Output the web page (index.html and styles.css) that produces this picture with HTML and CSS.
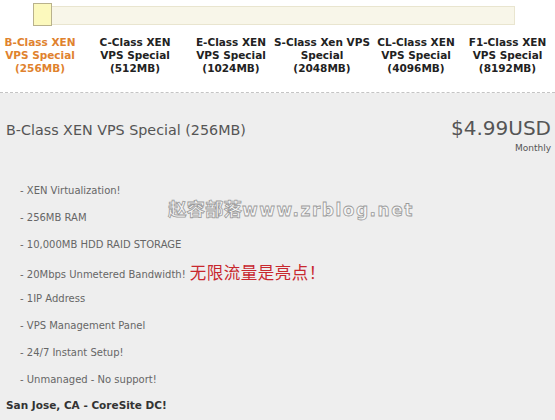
FILE: index.html
```html
<!DOCTYPE html>
<html>
<head>
<meta charset="utf-8">
<link rel="stylesheet" href="styles.css">
</head>
<body>
<div class="top">
  <div class="slider"><div class="handle"></div></div>
  <div class="tabs">
    <div class="tab active">B-Class XEN<br>VPS Special<br>(256MB)</div>
    <div class="tab">C-Class XEN<br>VPS Special<br>(512MB)</div>
    <div class="tab">E-Class XEN<br>VPS Special<br>(1024MB)</div>
    <div class="tab">S-Class Xen VPS<br>Special<br>(2048MB)</div>
    <div class="tab">CL-Class XEN<br>VPS Special<br>(4096MB)</div>
    <div class="tab">F1-Class XEN<br>VPS Special<br>(8192MB)</div>
  </div>
</div>
<div class="main">
  <div class="head">
    <h1 class="title">B-Class XEN VPS Special (256MB)</h1>
    <div class="price">
      <div class="amount">$4.99USD</div>
      <div class="period">Monthly</div>
    </div>
  </div>
  <ul class="features">
    <li>- XEN Virtualization!</li>
    <li>- 256MB RAM<span class="watermark"><span class="wm-cn">赵容部落</span><span class="wm-en">www.zrblog.net</span></span></li>
    <li>- 10,000MB HDD RAID STORAGE</li>
    <li>- 20Mbps Unmetered Bandwidth! <span class="note">无限流量是亮点！</span></li>
    <li>- 1IP Address</li>
    <li>- VPS Management Panel</li>
    <li>- 24/7 Instant Setup!</li>
    <li>- Unmanaged - No support!</li>
  </ul>
  <div class="location">San Jose, CA - CoreSite DC!</div>
</div>
</body>
</html>
```
FILE: styles.css
```css
html, body {
  margin: 0;
  padding: 0;
}
body {
  width: 555px;
  height: 420px;
  overflow: hidden;
  background: #eeeeee;
  font-family: "DejaVu Sans", Verdana, sans-serif;
}
.top {
  background: #ffffff;
  padding-top: 6px;
  height: 86px;
  border-bottom: 1px dashed #c4c4c4;
}
.slider {
  position: relative;
  margin-left: 33px;
  width: 480px;
  height: 17px;
  background: #f8f6e9;
  border: 1px solid #e9e5cf;
}
.handle {
  position: absolute;
  left: -1px;
  top: -4px;
  width: 17px;
  height: 21px;
  background: #fcf9bd;
  border: 1px solid #b9b28c;
}
.tabs {
  display: grid;
  grid-template-columns: 80px 110px 82px 100px 88px 95px;
  margin-top: 11px;
}
.tab {
  text-align: center;
  font-weight: bold;
  font-size: 10.5px;
  line-height: 13px;
  color: #222222;
  white-space: nowrap;
}
.tab.active {
  color: #e0822e;
}
.main {
  padding: 0 6px;
}
.head {
  display: flex;
  justify-content: space-between;
  align-items: flex-start;
  padding-top: 23px;
}
.title {
  margin: 6px 0 0;
  font-size: 14.3px;
  font-weight: normal;
  color: #555555;
}
.price {
  text-align: right;
  color: #555555;
  margin-right: -2px;
}
.amount {
  font-size: 20px;
  line-height: 24px;
}
.period {
  font-size: 9px;
  line-height: 14px;
  margin-top: 1px;
}
.features {
  list-style: none;
  margin: 29px 0 0;
  padding: 0 0 0 14px;
  font-size: 10px;
  color: #666666;
}
.features li {
  height: 27px;
  line-height: 14px;
  position: relative;
}
.watermark {
  position: absolute;
  left: 148px;
  top: -10px;
  font-weight: bold;
  color: #f6f6f6;
  -webkit-text-stroke: 0.8px #9a9a9a;
  white-space: nowrap;
}
.wm-cn {
  font-family: "Noto Sans CJK SC", sans-serif;
  font-size: 18.5px;
}
.wm-en {
  font-family: "DejaVu Sans", sans-serif;
  font-size: 17px;
  letter-spacing: 1.5px;
}
.note {
  font-family: "Noto Sans CJK SC", sans-serif;
  font-size: 16.5px;
  letter-spacing: 0.5px;
  color: #c8282e;
  margin-left: 1px;
  vertical-align: -1px;
}
.location {
  margin-top: -1px;
  font-size: 10.5px;
  font-weight: bold;
  color: #333333;
}
```
